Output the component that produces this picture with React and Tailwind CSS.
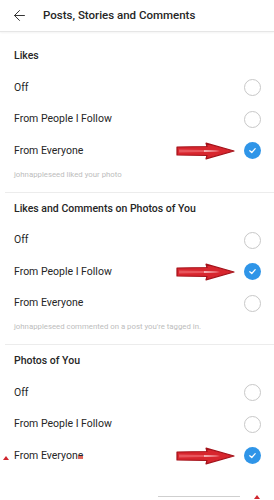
import { ArrowLeft } from 'lucide-react'

const SECTIONS = [
  {
    title: 'Likes',
    selected: 2,
    caption: 'johnappleseed liked your photo',
  },
  {
    title: 'Likes and Comments on Photos of You',
    selected: 1,
    caption: "johnappleseed commented on a post you're tagged in.",
  },
  {
    title: 'Photos of You',
    selected: 2,
    caption: null,
  },
]

const OPTIONS = ['Off', 'From People I Follow', 'From Everyone']

function RedArrow() {
  // hand drawn annotation arrow pointing at the checked radio
  return (
    <svg width="60" height="18" viewBox="0 0 60 18" className="absolute right-[38px] top-1/2 -translate-y-1/2">
      <path
        d="M1 5 L31 4.5 L30 1.2 L58 9 L30 16.8 L31 13.5 L1 13 Z"
        fill="#d7262e"
        stroke="#a3121a"
        strokeWidth="1.2"
        strokeLinejoin="round"
      />
      <path d="M3 7.5 L40 8.2 L44 9 L40 9.8 L3 10.5 Z" fill="#e8555c" />
      <path d="M28 8.3 L44 9 L28 9.7 Z" fill="#f8d5d7" />
    </svg>
  )
}

function Radio({ checked }) {
  if (checked) {
    return (
      <div className="w-[17px] h-[17px] rounded-full bg-[#2f95e8] flex items-center justify-center">
        <svg width="9" height="9" viewBox="0 0 10 10">
          <path d="M2 5.2 L4.2 7.2 L8 3" fill="none" stroke="white" strokeWidth="1.4" strokeLinecap="round" strokeLinejoin="round" />
        </svg>
      </div>
    )
  }
  return <div className="w-[17px] h-[17px] rounded-full border border-[#c8c8c8] bg-white" />
}

export default function App() {
  return (
    <div className="w-[274px] h-[500px] bg-white overflow-hidden relative font-['Roboto',sans-serif] text-[#262626]">
      {/* Header */}
      <div className="h-8 flex items-center border-b border-[#e6e6e6] shadow-[0_1px_2px_rgba(0,0,0,0.05)]">
        <ArrowLeft size={17} strokeWidth={1.4} className="ml-[11px] text-[#333]" />
        <span className="ml-[15px] text-[11.5px] font-medium">Posts, Stories and Comments</span>
      </div>

      <div className="pt-2">
        {SECTIONS.map((s, si) => (
          <div key={si} className={si < SECTIONS.length - 1 ? 'border-b border-[#ececec] pb-[9px] ml-[5px]' : 'ml-[5px]'}>
            <div className="h-8 flex items-center pl-[9px] text-[10.5px] font-medium">{s.title}</div>
            {OPTIONS.map((o, oi) => (
              <div key={o} className="relative h-[31.5px] flex items-center justify-between pl-[9px] pr-[13px]">
                <span className="text-[10.5px]">{o}</span>
                {s.selected === oi && <RedArrow />}
                <Radio checked={s.selected === oi} />
              </div>
            ))}
            {s.caption && (
              <div className="h-4 flex items-center pl-[9px] text-[7.8px] text-[#bdbdbd]">{s.caption}</div>
            )}
          </div>
        ))}
      </div>

      {/* crop marks left on the capture */}
      <div className="absolute left-[3px] top-[456px] w-0 h-0 border-l-[3px] border-r-[3px] border-b-[4px] border-l-transparent border-r-transparent border-b-[#d0262e]" />
      <div className="absolute left-[78px] top-[456px] w-[5px] h-[3px] bg-[#e06a5e]" />
      <div className="absolute left-[158px] top-[496px] w-[82px] h-px bg-[#cfcfcf]" />
      <div className="absolute left-[254px] top-[495px] w-0 h-0 border-l-[3px] border-r-[3px] border-b-[4px] border-l-transparent border-r-transparent border-b-[#d0262e]" />
    </div>
  )
}
